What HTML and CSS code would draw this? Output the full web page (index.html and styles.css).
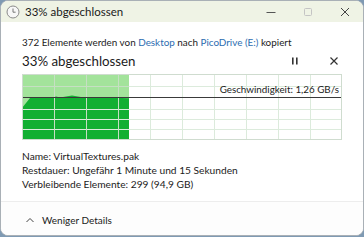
FILE: index.html
```html
<!DOCTYPE html>
<html lang="de">
<head>
<meta charset="utf-8">
<link rel="stylesheet" href="styles.css">
</head>
<body>
<div class="window">
  <div class="titlebar">
    <svg class="clock" width="14" height="14" viewBox="0 0 14 14">
      <circle cx="7" cy="7" r="6" fill="#f7f7f7" stroke="#8a8a8a" stroke-width="1"/>
      <path d="M7 3.5V7.2H9.6" fill="none" stroke="#777" stroke-width="1"/>
    </svg>
    <span class="title">33% abgeschlossen</span>
    <div class="winbtns">
      <span class="wb"><svg width="10" height="10" viewBox="0 0 10 10"><path d="M0.5 5.5H9.5" stroke="#555" stroke-width="1"/></svg></span>
      <span class="wb"><svg width="10" height="10" viewBox="0 0 10 10"><rect x="1.5" y="1.5" width="7" height="7" rx="1" fill="none" stroke="#c4c4c4" stroke-width="1"/></svg></span>
      <span class="wb"><svg width="10" height="10" viewBox="0 0 10 10"><path d="M1 1L9 9M9 1L1 9" stroke="#444" stroke-width="1"/></svg></span>
    </div>
  </div>
  <div class="content">
    <div class="desc">372 Elemente werden von <span class="link">Desktop</span> nach <span class="link">PicoDrive (E:)</span> kopiert</div>
    <div class="headrow">
      <div class="heading">33% abgeschlossen</div>
      <div class="ctrls">
        <svg width="10" height="10" viewBox="0 0 10 10"><rect x="2" y="1.5" width="1.6" height="7" fill="#333"/><rect x="6" y="1.5" width="1.6" height="7" fill="#333"/></svg>
        <svg width="10" height="10" viewBox="0 0 10 10"><path d="M1.5 1.5L8.5 8.5M8.5 1.5L1.5 8.5" stroke="#333" stroke-width="1.2"/></svg>
      </div>
    </div>
    <div class="graph">
      <svg width="320" height="66" viewBox="0 0 320 66">
        <rect x="0" y="0" width="107" height="66" fill="#a4e39b"/>
        <path d="M0 34 L8 24 L30 24 L34 22.5 L38 23.5 L44 22.5 L50 21.5 L56 22.5 L62 23.5 L72 23.8 L82 23.5 L92 23.6 L100 24 L107 24.3 L107 66 L0 66 Z" fill="#13b033"/>
        <g stroke="#dcebdc" stroke-width="1">
          <path d="M32.5 0V66M64.5 0V66M96.5 0V66M128.5 0V66M160.5 0V66M192.5 0V66M224.5 0V66M256.5 0V66M288.5 0V66"/>
          <path d="M0 12.5H320M0 35.5H320M0 45.5H320M0 55.5H320"/>
        </g>
        <g stroke="#b8d8b3" stroke-width="1" opacity="0.6">
          <path d="M32.5 0V66M64.5 0V66M96.5 0V66"/>
          <path d="M0 12.5H107"/>
        </g>
        <path d="M0 23.5H320" stroke="#3a3a3a" stroke-width="1"/>
        <rect x="0.5" y="0.5" width="319" height="65" fill="none" stroke="#cfdccf"/>
      </svg>
      <div class="speed">Geschwindigkeit: 1,26 GB/s</div>
    </div>
    <div class="info">
      <div>Name: VirtualTextures.pak</div>
      <div>Restdauer: Ungefähr 1 Minute und 15 Sekunden</div>
      <div>Verbleibende Elemente: 299 (94,9 GB)</div>
    </div>
  </div>
  <div class="footer">
    <svg width="10" height="10" viewBox="0 0 10 10"><path d="M1.5 7L5 3.5L8.5 7" fill="none" stroke="#444" stroke-width="1"/></svg>
    <span>Weniger Details</span>
  </div>
</div>
</body>
</html>
```
FILE: styles.css
```css
html, body {
  margin: 0;
  padding: 0;
}
body {
  width: 364px;
  height: 237px;
  background: #7f9ab3;
  font-family: Lato, "Noto Sans", sans-serif;
  color: #1b1b1b;
  overflow: hidden;
}
.window {
  box-sizing: border-box;
  width: 364px;
  height: 236px;
  border: 1px solid #a9b0b6;
  border-radius: 8px;
  background: #ffffff;
  overflow: hidden;
  display: flex;
  flex-direction: column;
}
.titlebar {
  height: 21px;
  flex: none;
  background: #eff3e5;
  display: flex;
  align-items: center;
  padding-left: 5px;
}
.clock {
  display: block;
}
.title {
  margin-left: 5px;
  font-size: 11.5px;
  color: #1a1a1a;
}
.winbtns {
  margin-left: auto;
  display: flex;
}
.wb {
  width: 37px;
  height: 21px;
  display: flex;
  align-items: center;
  justify-content: center;
}
.wb svg {
  display: block;
}
.content {
  padding: 12px 0 0 21px;
  flex: none;
}
.desc {
  font-size: 9.9px;
  line-height: 16px;
}
.link {
  color: #2b6cb0;
}
.headrow {
  display: flex;
  align-items: center;
  height: 20px;
  margin-top: 1px;
}
.heading {
  font-size: 13.3px;
  line-height: 20px;
}
.ctrls {
  margin-left: auto;
  margin-right: 24px;
  display: flex;
  gap: 29px;
}
.ctrls svg {
  display: block;
}
.graph {
  position: relative;
  width: 320px;
  height: 66px;
  margin-top: 3px;
}
.graph svg {
  display: block;
}
.speed {
  position: absolute;
  right: 3px;
  top: 8px;
  font-size: 9.8px;
  line-height: 14px;
}
.info {
  margin-top: 9px;
  font-size: 10.2px;
  line-height: 14px;
}
.footer {
  flex: 1;
  margin-top: 10px;
  border-top: 1px solid #ededed;
  background: #fdfdfd;
  display: flex;
  align-items: center;
  padding-left: 24px;
  padding-top: 3px;
  font-size: 10px;
  gap: 7px;
}
.footer svg {
  display: block;
}
```
